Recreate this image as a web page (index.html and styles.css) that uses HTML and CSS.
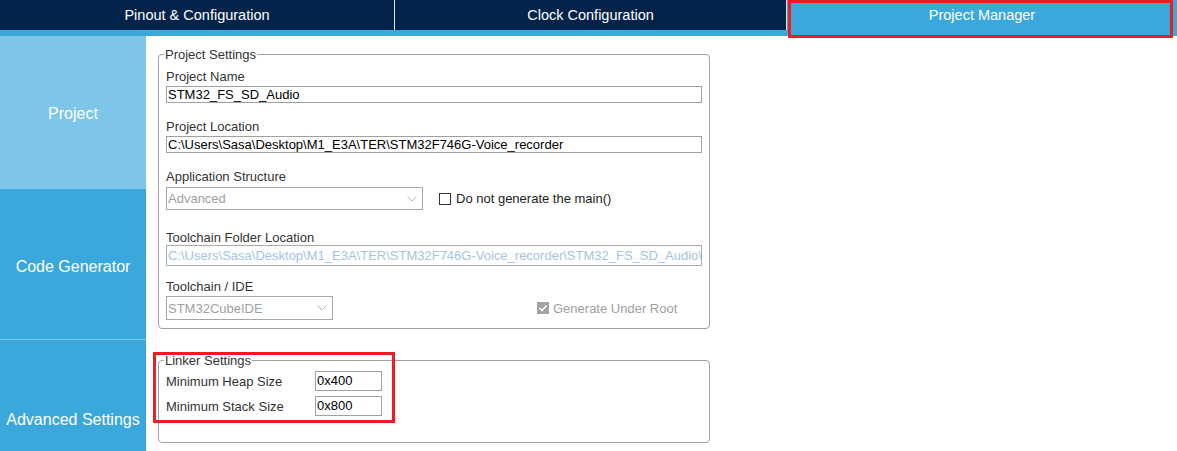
FILE: index.html
```html
<!DOCTYPE html>
<html lang="en">
<head>
<meta charset="utf-8">
<title>Project Manager</title>
<link rel="stylesheet" href="styles.css">
</head>
<body>
<div class="app">
  <header class="tabs">
    <div class="tab tab-pinout">Pinout &amp; Configuration</div>
    <div class="tab tab-clock">Clock Configuration</div>
    <div class="tab tab-active">Project Manager</div>
  </header>
  <div class="strip"></div>
  <div class="content">
    <nav class="side">
      <div class="side-item side-active">Project</div>
      <div class="side-item side-code">Code Generator</div>
      <div class="side-item side-adv">Advanced Settings</div>
    </nav>
    <main class="main">
      <fieldset class="group group-project">
        <legend>Project Settings</legend>
        <div class="label l-name">Project Name</div>
        <div class="field f-name">STM32_FS_SD_Audio</div>
        <div class="label l-loc">Project Location</div>
        <div class="field f-loc">C:\Users\Sasa\Desktop\M1_E3A\TER\STM32F746G-Voice_recorder</div>
        <div class="label l-app">Application Structure</div>
        <div class="row row-app">
          <div class="select select-app">
            <span>Advanced</span>
            <svg class="chev" width="10" height="6" viewBox="0 0 10 6"><polyline points="0.5,0.5 5,5 9.5,0.5" fill="none" stroke="#b4b4b4" stroke-width="1"/></svg>
          </div>
          <div class="check check-main">
            <span class="box"></span>
            <span class="check-text">Do not generate the main()</span>
          </div>
        </div>
        <div class="label l-tcf">Toolchain Folder Location</div>
        <div class="field field-disabled f-tcf">C:\Users\Sasa\Desktop\M1_E3A\TER\STM32F746G-Voice_recorder\STM32_FS_SD_Audio\</div>
        <div class="label l-ide">Toolchain / IDE</div>
        <div class="row row-ide">
          <div class="select select-ide">
            <span>STM32CubeIDE</span>
            <svg class="chev" width="10" height="6" viewBox="0 0 10 6"><polyline points="0.5,0.5 5,5 9.5,0.5" fill="none" stroke="#b4b4b4" stroke-width="1"/></svg>
          </div>
          <div class="check check-root">
            <span class="box box-checked"><svg width="12" height="12" viewBox="0 0 12 12"><polyline points="2.5,6 5,8.5 9.5,3.5" fill="none" stroke="#fff" stroke-width="1.6"/></svg></span>
            <span class="check-text">Generate Under Root</span>
          </div>
        </div>
      </fieldset>
      <fieldset class="group group-linker">
        <legend>Linker Settings</legend>
        <div class="lrow lrow-heap">
          <span class="llabel">Minimum Heap Size</span>
          <span class="lfield">0x400</span>
        </div>
        <div class="lrow lrow-stack">
          <span class="llabel">Minimum Stack Size</span>
          <span class="lfield">0x800</span>
        </div>
      </fieldset>
    </main>
  </div>
  <div class="mark mark-tab"></div>
  <div class="mark mark-linker"></div>
</div>
</body>
</html>
```
FILE: styles.css
```css
* { box-sizing: border-box; }
html, body { margin: 0; padding: 0; }
body {
  width: 1177px;
  height: 451px;
  overflow: hidden;
  background: #ffffff;
  font-family: "Liberation Sans", Arial, sans-serif;
}
.app { position: relative; width: 1177px; height: 451px; overflow: hidden; }

/* top tabs */
.tabs { display: flex; height: 30px; background: #03234b; }
.tab {
  height: 30px;
  line-height: 31px;
  text-align: center;
  color: #ffffff;
  font-size: 14.5px;
  white-space: nowrap;
}
.tab-pinout { width: 395px; border-right: 1px solid #dde4ec; }
.tab-clock { width: 392px; border-right: 1px solid #dde4ec; }
.tab-active { flex: 1; background: #3ba8db; }
.strip { height: 6px; background: #3ba8db; }

/* body */
.content { display: flex; height: 415px; }
.side {
  width: 146px;
  flex: none;
  background: #3ba8db;
  display: flex;
  flex-direction: column;
  overflow: hidden;
}
.side-item {
  flex: none;
  padding-top: 69px;
  text-align: center;
  color: #ffffff;
  font-size: 16px;
  white-space: nowrap;
}
.side-active { height: 153px; background: #7dc5e9; }
.side-code { height: 151px; border-bottom: 1px solid #7dc5e9; }
.side-adv { height: 150px; padding-top: 71px; }

.main { flex: 1; padding: 11px 0 0 12px; }

/* fieldsets */
.group {
  margin: 0;
  width: 552px;
  border: 1px solid #a0a0a0;
  border-radius: 4px;
  padding: 0 7px 8px 7px;
  min-width: 0;
}
.group legend {
  font-size: 13px;
  line-height: 15px;
  color: #333333;
  padding: 0 1px;
  margin-left: -2px;
}
.label {
  font-size: 13px;
  line-height: 15px;
  color: #333333;
  white-space: nowrap;
}
.l-name { margin-top: 7px; }
.l-loc { margin-top: 16px; }
.l-app { margin-top: 16px; }
.l-tcf { margin-top: 20px; }
.l-ide { margin-top: 13px; }

.field {
  height: 17px;
  border: 1px solid #a0a0a0;
  padding: 0 1px;
  font-size: 13px;
  line-height: 16px;
  color: #000000;
  white-space: nowrap;
}
.f-name, .f-loc { margin-top: 2px; }
.field-disabled {
  height: 21px;
  line-height: 19px;
  color: #a5c3e3;
  border-color: #a8acb0;
  overflow: hidden;
}

.row { display: flex; align-items: center; }
.row-app { margin-top: 3px; height: 23px; }
.row-ide { margin-top: 2px; height: 24px; }

.select {
  height: 100%;
  border: 1px solid #a6a6a6;
  display: flex;
  align-items: center;
  justify-content: space-between;
  padding: 0 5px 0 1px;
  font-size: 13px;
  color: #a0a0a0;
  white-space: nowrap;
}
.select-app { width: 257px; }
.select-ide { width: 167px; }
.chev { display: block; }

.check { display: flex; align-items: center; font-size: 13px; white-space: nowrap; }
.check-main { margin-left: 16px; color: #222222; }
.check-main .check-text { margin-left: 5px; }
.check-root { margin-left: 204px; color: #a0a0a0; }
.check-root .check-text { margin-left: 4px; }
.box {
  width: 12px;
  height: 12px;
  border: 1px solid #333333;
  background: #ffffff;
  display: block;
}
.box-checked {
  border: none;
  background: #a3a3a3;
}
.box-checked svg { display: block; }

/* linker */
.group-linker { margin-top: 24px; padding-bottom: 26px; }
.lrow { display: flex; align-items: center; height: 20px; }
.lrow-heap { margin-top: 3px; }
.lrow-stack { margin-top: 5px; }
.llabel {
  width: 149px;
  font-size: 13px;
  color: #333333;
  white-space: nowrap;
}
.lfield {
  width: 67px;
  height: 20px;
  border: 1px solid #a0a0a0;
  padding: 0 1px;
  font-size: 13px;
  line-height: 18px;
  color: #000000;
}

/* red annotation rectangles */
.mark {
  position: absolute;
  border: 3px solid #ed1c24;
  pointer-events: none;
}
.mark-tab { left: 788px; top: 0; width: 385px; height: 38px; }
.mark-linker { left: 153px; top: 352px; width: 242px; height: 71px; }
```
